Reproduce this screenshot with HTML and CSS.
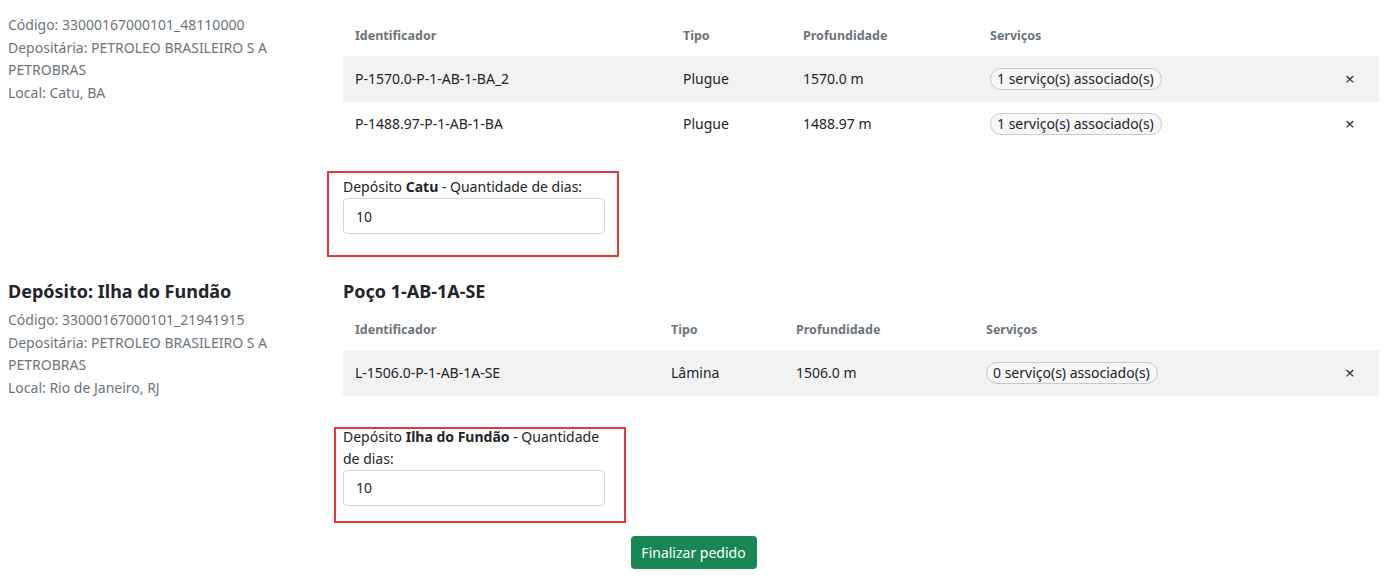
FILE: index.html
```html
<!DOCTYPE html>
<html lang="pt-BR">
<head>
<meta charset="utf-8">
<title>Pedido</title>
<link rel="stylesheet" href="styles.css">
</head>
<body>
<main class="page">
  <section class="deposit deposit-first">
    <div class="deposit-info">
      <p class="meta">Código: 33000167000101_48110000</p>
      <p class="meta">Depositária: PETROLEO BRASILEIRO S A PETROBRAS</p>
      <p class="meta">Local: Catu, BA</p>
    </div>
    <div class="deposit-body">
      <table class="samples samples-a">
        <thead>
          <tr><th class="c-id">Identificador</th><th class="c-tipo">Tipo</th><th class="c-prof">Profundidade</th><th class="c-serv">Serviços</th><th class="c-x"></th></tr>
        </thead>
        <tbody>
          <tr class="striped"><td>P-1570.0-P-1-AB-1-BA_2</td><td>Plugue</td><td>1570.0 m</td><td><span class="pill">1 serviço(s) associado(s)</span></td><td class="remove">×</td></tr>
          <tr><td>P-1488.97-P-1-AB-1-BA</td><td>Plugue</td><td>1488.97 m</td><td><span class="pill">1 serviço(s) associado(s)</span></td><td class="remove">×</td></tr>
        </tbody>
      </table>
      <div class="mark mark-a">
        <div class="field">
          <label class="field-label" for="dias-catu">Depósito <b>Catu</b> - Quantidade de dias:</label>
          <input class="field-input" id="dias-catu" type="text" value="10">
        </div>
      </div>
    </div>
  </section>

  <section class="deposit deposit-second">
    <div class="deposit-info">
      <h5 class="title">Depósito: Ilha do Fundão</h5>
      <p class="meta">Código: 33000167000101_21941915</p>
      <p class="meta">Depositária: PETROLEO BRASILEIRO S A PETROBRAS</p>
      <p class="meta">Local: Rio de Janeiro, RJ</p>
    </div>
    <div class="deposit-body">
      <h5 class="title well-title">Poço 1-AB-1A-SE</h5>
      <table class="samples samples-b">
        <thead>
          <tr><th class="c-id">Identificador</th><th class="c-tipo">Tipo</th><th class="c-prof">Profundidade</th><th class="c-serv">Serviços</th><th class="c-x"></th></tr>
        </thead>
        <tbody>
          <tr class="striped"><td>L-1506.0-P-1-AB-1A-SE</td><td>Lâmina</td><td>1506.0 m</td><td><span class="pill">0 serviço(s) associado(s)</span></td><td class="remove">×</td></tr>
        </tbody>
      </table>
      <div class="mark mark-b">
        <div class="field field-tight">
          <label class="field-label" for="dias-ilha">Depósito <b>Ilha do Fundão</b> - Quantidade de dias:</label>
          <input class="field-input" id="dias-ilha" type="text" value="10">
        </div>
      </div>
    </div>
  </section>

  <div class="actions">
    <button class="btn-finish" type="button">Finalizar pedido</button>
  </div>
</main>
</body>
</html>
```

FILE: styles.css
```css
* { box-sizing: border-box; }

html, body {
  margin: 0;
  padding: 0;
  background: #fff;
}

body {
  font-family: "Noto Sans", "Open Sans", "Liberation Sans", sans-serif;
  font-size: 14px;
  color: #212529;
}

.page {
  width: 1371px;
  margin-left: 8px;
  padding-top: 14px;
  display: flex;
  flex-direction: column;
}

.deposit {
  display: flex;
  align-items: flex-start;
}

.deposit-second {
  margin-top: 22px;
}

.deposit-info {
  width: 335px;
  flex: none;
  padding-right: 40px;
}

.deposit-body {
  flex: 1;
  min-width: 0;
}

.meta {
  margin: 0;
  color: #6c757d;
  line-height: 22.5px;
}

.title {
  margin: 0 0 6px 0;
  font-size: 18px;
  font-weight: 700;
  line-height: 24px;
  color: #212529;
}

.well-title {
  margin-bottom: 5px;
}

.samples {
  width: 100%;
  border-collapse: collapse;
  table-layout: fixed;
}

.samples th {
  text-align: left;
  font-size: 12.5px;
  font-weight: 700;
  color: #6c757d;
  padding: 11px 12px 9px;
  line-height: 22px;
}

.samples td {
  padding: 11.75px 12px;
  line-height: 22px;
  height: 45.5px;
  vertical-align: middle;
}

.samples .striped td {
  background: #f2f2f2;
}

.samples-a .c-id { width: 328px; }
.samples-a .c-tipo { width: 120px; }
.samples-a .c-prof { width: 187px; }
.samples-a .c-serv { width: 355px; }
.samples-a .c-x { width: 46px; }

.samples-b .c-id { width: 316px; }
.samples-b .c-tipo { width: 125px; }
.samples-b .c-prof { width: 190px; }
.samples-b .c-serv { width: 359px; }
.samples-b .c-x { width: 46px; }

.pill {
  display: inline-block;
  vertical-align: top;
  border: 1px solid #c9c9c9;
  border-radius: 11px;
  background: #f7f7f7;
  padding: 0 7px 0 6px;
  line-height: 20px;
  white-space: nowrap;
}

.remove {
  color: #333;
  font-size: 17px;
}

.mark {
  border: 2px solid #e53935;
}

.mark-a {
  width: 292px;
  margin: 24px 0 0 -16px;
  padding: 3px 11px 21px 14px;
}

.mark-b {
  width: 292px;
  margin: 31px 0 0 -9px;
  padding: 0 18px 15px 7px;
}

.field {
  width: 262px;
}

.field-tight {
  margin-top: -3px;
}

.field-label {
  display: block;
  line-height: 22px;
}

.field-label b {
  font-weight: 700;
}

.field-input {
  display: block;
  width: 262px;
  height: 36px;
  margin-top: 0;
  padding: 6px 12px;
  border: 1px solid #ced4da;
  border-radius: 4px;
  font-family: inherit;
  font-size: 14px;
  color: #212529;
  background: #fff;
}

.actions {
  margin-top: 13px;
  display: flex;
  justify-content: center;
}

.btn-finish {
  width: 126px;
  height: 33px;
  border: none;
  border-radius: 4px;
  background: #198754;
  color: #fff;
  font-family: inherit;
  font-size: 14px;
  padding: 0;
}
```
